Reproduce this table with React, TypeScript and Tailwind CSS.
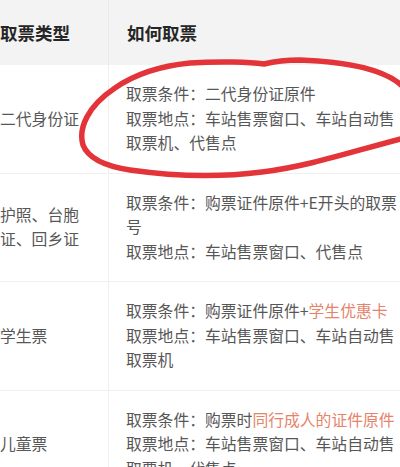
import React from "react";

interface Row {
  type: React.ReactNode;
  lines: React.ReactNode;
}

const hl = "text-[#e5846b]";

const rows: Row[] = [
  {
    type: "二代身份证",
    lines: (
      <>
        取票条件：二代身份证原件
        <br />
        取票地点：车站售票窗口、车站自动售取票机、代售点
      </>
    ),
  },
  {
    type: "护照、台胞证、回乡证",
    lines: (
      <>
        取票条件：购票证件原件+E开头的取票号
        <br />
        取票地点：车站售票窗口、代售点
      </>
    ),
  },
  {
    type: "学生票",
    lines: (
      <>
        取票条件：购票证件原件+<span className={hl}>学生优惠卡</span>
        <br />
        取票地点：车站售票窗口、车站自动售取票机
      </>
    ),
  },
  {
    type: "儿童票",
    lines: (
      <>
        取票条件：购票时<span className={hl}>同行成人的证件原件</span>
        <br />
        取票地点：车站售票窗口、车站自动售取票机、代售点
      </>
    ),
  },
];

// hand-drawn red mark over the first row
const Circle = () => (
  <svg
    className="absolute left-0 top-0 pointer-events-none"
    width="400"
    height="467"
    viewBox="0 0 400 467"
  >
    <path
      d="M404 88 C388 70 350 62 300 60 C285 60 272 62 264 64 C250 62 220 61 190 63 C160 66 135 74 115 88 C88 106 78 128 83 145 C88 158 104 166 130 170 C165 175 215 178 262 172 C310 166 350 152 404 138"
      fill="none"
      stroke="#e3343a"
      strokeWidth="5.5"
      strokeLinecap="round"
      strokeLinejoin="round"
    />
  </svg>
);

export default function App() {
  return (
    <div
      className="relative w-[400px] h-[467px] overflow-hidden bg-white"
      style={{ fontFamily: '"Noto Sans CJK SC", "Noto Sans", sans-serif' }}
    >
      <div className="grid grid-cols-[108px_1fr] h-[65px] bg-[#f3f3f3] text-[17.5px] font-bold text-[#262626]">
        <div className="flex items-center pt-[2px]">取票类型</div>
        <div className="flex items-center pl-[18px] pt-[2px] border-l border-[#eaeaea]">
          如何取票
        </div>
      </div>
      {rows.map((row, i) => (
        <div
          key={i}
          className="grid grid-cols-[108px_1fr] border-b border-[#efefef] text-[15.8px] leading-[24.5px] text-[#575757]"
        >
          <div className="flex items-center pr-[18px]">{row.type}</div>
          <div className="border-l border-[#efefef] pl-[17px] py-[17px] w-[292px]">
            <div className="w-[279px]">{row.lines}</div>
          </div>
        </div>
      ))}
      <Circle />
    </div>
  );
}
